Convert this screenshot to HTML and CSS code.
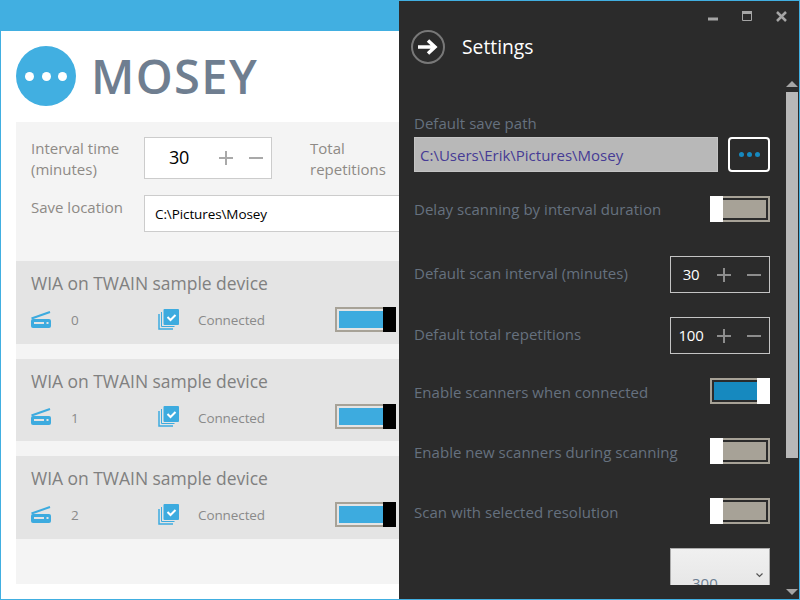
FILE: index.html
```html
<!DOCTYPE html>
<html lang="en">
<head>
<meta charset="utf-8">
<title>Mosey</title>
<link rel="stylesheet" href="styles.css">
</head>
<body>
<div class="window">
  <div class="titlebar"></div>
  <main class="main">
    <header class="brand">
      <div class="logo"><i></i><i></i><i></i></div>
      <h1 class="brand-name">MOSEY</h1>
    </header>
    <section class="panel">
      <div class="controls">
        <div class="line line-top">
          <div class="ctl-label">Interval time<br>(minutes)</div>
          <div class="stepper stepper-light">
            <span class="stepper-val">30</span>
            <svg class="stepper-ops" width="46" height="16" viewBox="0 0 46 16"><path d="M7 1v14M0 8h14M30 8h14" fill="none" stroke="#a9a9a9" stroke-width="2"/></svg>
          </div>
          <div class="ctl-label ctl-total">Total<br>repetitions</div>
        </div>
        <div class="line line-save">
          <div class="ctl-label">Save location</div>
          <div class="path-input">C:\Pictures\Mosey</div>
        </div>
      </div>
      <div class="devices">
        <article class="device">
          <div class="device-name">WIA on TWAIN sample device</div>
          <div class="device-row">
            <svg class="ic-scan" width="20" height="17" viewBox="0 0 20 17"><path d="M0.5 7.5 19 1" fill="none" stroke="#3dabdf" stroke-width="2"/><rect y="8" width="20" height="9" rx="2" fill="#3dabdf"/><rect x="3" y="11" width="10" height="2" fill="#e4e4e4"/><rect x="15.500" y="11" width="2" height="2" fill="#e4e4e4"/></svg>
            <span class="device-num">0</span>
            <svg class="ic-check" width="21" height="21" viewBox="0 0 21 21"><path d="M1 5v15h14" fill="none" stroke="#3dabdf" stroke-width="1.500"/><path d="M3.500 3v14.500h13" fill="none" stroke="#3dabdf" stroke-width="1"/><rect x="5.500" width="15.500" height="16" rx="1" fill="#3dabdf"/><path d="M9.500 8l3 3 5-5" fill="none" stroke="#fff" stroke-width="2"/></svg>
            <span class="device-status">Connected</span>
            <div class="dev-toggle"><b class="dev-fill"></b><b class="dev-thumb"></b></div>
          </div>
        </article>
        <article class="device">
          <div class="device-name">WIA on TWAIN sample device</div>
          <div class="device-row">
            <svg class="ic-scan" width="20" height="17" viewBox="0 0 20 17"><path d="M0.5 7.5 19 1" fill="none" stroke="#3dabdf" stroke-width="2"/><rect y="8" width="20" height="9" rx="2" fill="#3dabdf"/><rect x="3" y="11" width="10" height="2" fill="#e4e4e4"/><rect x="15.500" y="11" width="2" height="2" fill="#e4e4e4"/></svg>
            <span class="device-num">1</span>
            <svg class="ic-check" width="21" height="21" viewBox="0 0 21 21"><path d="M1 5v15h14" fill="none" stroke="#3dabdf" stroke-width="1.500"/><path d="M3.500 3v14.500h13" fill="none" stroke="#3dabdf" stroke-width="1"/><rect x="5.500" width="15.500" height="16" rx="1" fill="#3dabdf"/><path d="M9.500 8l3 3 5-5" fill="none" stroke="#fff" stroke-width="2"/></svg>
            <span class="device-status">Connected</span>
            <div class="dev-toggle"><b class="dev-fill"></b><b class="dev-thumb"></b></div>
          </div>
        </article>
        <article class="device">
          <div class="device-name">WIA on TWAIN sample device</div>
          <div class="device-row">
            <svg class="ic-scan" width="20" height="17" viewBox="0 0 20 17"><path d="M0.5 7.5 19 1" fill="none" stroke="#3dabdf" stroke-width="2"/><rect y="8" width="20" height="9" rx="2" fill="#3dabdf"/><rect x="3" y="11" width="10" height="2" fill="#e4e4e4"/><rect x="15.500" y="11" width="2" height="2" fill="#e4e4e4"/></svg>
            <span class="device-num">2</span>
            <svg class="ic-check" width="21" height="21" viewBox="0 0 21 21"><path d="M1 5v15h14" fill="none" stroke="#3dabdf" stroke-width="1.500"/><path d="M3.500 3v14.500h13" fill="none" stroke="#3dabdf" stroke-width="1"/><rect x="5.500" width="15.500" height="16" rx="1" fill="#3dabdf"/><path d="M9.500 8l3 3 5-5" fill="none" stroke="#fff" stroke-width="2"/></svg>
            <span class="device-status">Connected</span>
            <div class="dev-toggle"><b class="dev-fill"></b><b class="dev-thumb"></b></div>
          </div>
        </article>
      </div>
    </section>
  </main>

  <aside class="flyout">
    <div class="caption">
      <svg class="cap-ic" width="10" height="4" viewBox="0 0 10 4"><rect width="10" height="3" y="0.500" fill="#a5a5a5"/></svg>
      <svg class="cap-ic" width="10" height="10" viewBox="0 0 10 10"><path d="M0.500 0.500h9v9h-9z" fill="none" stroke="#a5a5a5"/><rect width="10" height="3" fill="#a5a5a5"/></svg>
      <svg class="cap-ic" width="11" height="11" viewBox="0 0 11 11"><path d="M1 1l9 9M10 1l-9 9" fill="none" stroke="#a5a5a5" stroke-width="2.500"/></svg>
    </div>
    <div class="fly-head">
      <div class="back">
        <svg width="22" height="16" viewBox="0 0 22 16"><path d="M1 8h17M11 1.500 18 8l-7 6.500" fill="none" stroke="#fff" stroke-width="3.500"/></svg>
      </div>
      <div class="fly-title">Settings</div>
    </div>
    <div class="fly-body">
      <div class="scroll">
        <div class="s-label">Default save path</div>
        <div class="path-row">
          <div class="s-path">C:\Users\Erik\Pictures\Mosey</div>
          <div class="dots"><i></i><i></i><i></i></div>
        </div>
        <div class="s-row toggle-row gap-24">
          <span class="s-label">Delay scanning by interval duration</span>
          <div class="tgl"><b class="tgl-fill"></b><b class="tgl-thumb"></b></div>
        </div>
        <div class="s-row step-row gap-34">
          <span class="s-label">Default scan interval (minutes)</span>
          <div class="stepper stepper-dark">
            <span class="stepper-val">30</span>
            <svg class="stepper-ops" width="46" height="16" viewBox="0 0 46 16"><path d="M7 1v14M0 8h14M30 8h14" fill="none" stroke="#8d8d8d" stroke-width="2"/></svg>
          </div>
        </div>
        <div class="s-row step-row gap-24">
          <span class="s-label">Default total repetitions</span>
          <div class="stepper stepper-dark">
            <span class="stepper-val">100</span>
            <svg class="stepper-ops" width="46" height="16" viewBox="0 0 46 16"><path d="M7 1v14M0 8h14M30 8h14" fill="none" stroke="#8d8d8d" stroke-width="2"/></svg>
          </div>
        </div>
        <div class="s-row toggle-row gap-24">
          <span class="s-label s-label-low">Enable scanners when connected</span>
          <div class="tgl tgl-on"><b class="tgl-fill"></b><b class="tgl-thumb"></b></div>
        </div>
        <div class="s-row toggle-row gap-34">
          <span class="s-label s-label-low">Enable new scanners during scanning</span>
          <div class="tgl"><b class="tgl-fill"></b><b class="tgl-thumb"></b></div>
        </div>
        <div class="s-row toggle-row gap-34">
          <span class="s-label s-label-low">Scan with selected resolution</span>
          <div class="tgl"><b class="tgl-fill"></b><b class="tgl-thumb"></b></div>
        </div>
        <div class="s-row select-row gap-24">
          <div class="select">
            <span class="select-val">300</span>
            <svg class="chev" width="7" height="5" viewBox="0 0 7 5"><path d="M0.500 0.500 3.500 3.500 6.500 0.500" fill="none" stroke="#555" stroke-width="1.200"/></svg>
          </div>
        </div>
      </div>
      <div class="scrollbar">
        <span class="arrow arrow-up"></span>
        <span class="thumb"></span>
        <span class="arrow arrow-down"></span>
      </div>
    </div>
  </aside>
</div>
</body>
</html>
```
FILE: styles.css
```css
* { box-sizing: border-box; }
html, body { margin: 0; padding: 0; }
body { font-family: "Open Sans", "Noto Sans", sans-serif; background: #fff; }

.window {
  position: relative;
  width: 800px;
  height: 600px;
  overflow: hidden;
  background: #fff;
  border: 1px solid #41afe1;
  border-top: 0;
  display: flex;
  flex-direction: column;
}
.titlebar { height: 31px; background: #41afe1; flex: none; }

.main { flex: 1; padding: 15px; display: flex; flex-direction: column; min-height: 0; }
.brand { display: flex; align-items: center; gap: 15px; height: 60px; flex: none; }
.logo {
  width: 60px; height: 60px; border-radius: 50%;
  background: #41afe1;
  display: flex; align-items: center; justify-content: center; gap: 7.500px;
}
.logo i { width: 9px; height: 9px; border-radius: 50%; background: #fff; }
.brand-name {
  margin: 0; font-size: 47px; font-weight: 600; line-height: 60px;
  color: #6f7e90; letter-spacing: 1.400px;
}

.panel { margin-top: 16px; flex: 1; background: #f4f4f4; min-height: 0; }
.controls { padding: 15px 15px 0; height: 139px; }
.line { display: flex; }
.ctl-label { width: 113px; font-size: 15px; line-height: 21px; color: #8e8a86; flex: none; }
.line-top .ctl-label { padding-top: 1px; }
.ctl-total { margin-left: 38px; }
.stepper { display: flex; align-items: center; flex: none; }
.stepper-light {
  width: 128px; height: 42px; background: #fff; border: 1px solid #ccc;
  color: #000; font-size: 18px; padding-left: 24px;
}
.stepper-light .stepper-val { width: 50px; padding-bottom: 2px; letter-spacing: -0.300px; }
.line-save { margin-top: 15px; }
.line-save .ctl-label { padding-top: 2px; }
.path-input {
  flex: 1; height: 37px; background: #fff; border: 1px solid #ccc;
  padding-left: 10px; font-size: 13.500px; line-height: 37px; color: #000; letter-spacing: -0.100px;
}

.devices { display: flex; flex-direction: column; gap: 15px; }
.device { height: 82.500px; background: #e4e4e4; padding: 9px 15px 0; }
.device-name { font-size: 17.500px; line-height: 26px; color: #808080; letter-spacing: -0.030px; }
.device-row { display: flex; align-items: center; height: 26px; margin-top: 10px; color: #8a8a8a; font-size: 13.500px; }
.ic-scan { flex: none; }
.device-num { width: 87px; margin-left: 20px; flex: none; padding-top: 2px; }
.ic-check { flex: none; }
.device-status { margin-left: 19px; width: 137px; flex: none; padding-top: 2px; letter-spacing: -0.100px; }
.dev-toggle {
  position: relative; width: 61px; height: 25px; flex: none;
  border: 2px solid #a7a297; border-right-width: 1px;
  background: #e4e4e4;
}
.dev-fill { position: absolute; left: 2px; top: 2px; bottom: 2px; width: 45px; background: #3dabdf; }
.dev-thumb { position: absolute; left: 46px; top: -2px; bottom: -2px; width: 13px; background: #000; }

.flyout {
  position: absolute; left: 398px; top: 1px; right: 0; bottom: 0;
  background: #2b2b2b; display: flex; flex-direction: column;
}
.caption { display: flex; height: 26px; align-items: flex-start; padding: 10px 12px 0 0; justify-content: flex-end; gap: 24px; flex: none; }
.cap-ic:first-child { margin-top: 6px; }
.fly-head { display: flex; align-items: center; height: 34px; margin-top: 3px; padding-left: 12px; gap: 17px; flex: none; }
.back {
  width: 34px; height: 34px; border-radius: 50%; border: 2px solid #787878;
  display: flex; align-items: center; justify-content: center;
}
.fly-title { font-size: 19.300px; color: #fff; line-height: 34px; }

.fly-body { flex: 1; min-height: 0; display: flex; margin-top: 16px; }
.scroll { width: 356px; margin-left: 15px; height: 505px; overflow: hidden; padding-top: 34px; flex: none; display: flex; flex-direction: column; }
.s-label { font-size: 15px; line-height: 18px; color: #66717f; letter-spacing: 0.030px; }
.step-row .s-label { padding-bottom: 4px; }
.s-label-low { padding-top: 2px; }
.path-row { display: flex; justify-content: space-between; margin-top: 5px; flex: none; }
.s-path {
  width: 304px; height: 35px; background: #b8b8b8; border: 1px solid #c4c4c4;
  color: #463b95; font-size: 15px; line-height: 34px; padding-left: 5px;
}
.dots {
  width: 42px; height: 35px; border: 2px solid #fff; border-radius: 4px;
  display: flex; align-items: center; justify-content: center; gap: 3px;
}
.dots i { width: 5px; height: 5px; border-radius: 50%; background: #1689bf; }

.s-row { display: flex; justify-content: space-between; align-items: center; flex: none; }
.toggle-row { height: 26px; }
.step-row { height: 37px; }
.select-row { justify-content: flex-end; }
.gap-24 { margin-top: 24px; }
.gap-34 { margin-top: 34px; }

.stepper-dark {
  width: 100px; height: 37px; border: 1px solid #c4c4c4; color: #fff;
  font-size: 15px; position: relative;
}
.stepper-dark .stepper-val { width: 40px; margin-right: 6px; text-align: center; padding-bottom: 1px; letter-spacing: -0.300px; }

.tgl { position: relative; width: 60px; height: 26px; border: 2px solid #a7a297; border-left: 0; flex: none; }
.tgl-fill { position: absolute; left: 13px; right: 2px; top: 2px; bottom: 2px; background: #a7a297; }
.tgl-thumb { position: absolute; left: 0; top: -2px; bottom: -2px; width: 13px; background: #fff; }
.tgl-on { border-left: 2px solid #a7a297; border-right: 0; }
.tgl-on .tgl-fill { left: 2px; right: 13px; background: #1689bf; }
.tgl-on .tgl-thumb { left: auto; right: 0; }

.select {
  width: 100px; height: 46px; position: relative;
  background: linear-gradient(#f0f0f0, #e5e5e5); border: 1px solid #acacac; border-bottom: 0;
  flex: none; display: flex;
}
.select-val { font-size: 15px; line-height: 20px; color: #6d7f92; padding: 24px 0 0 21px; }
.chev { position: absolute; right: 6px; top: 24px; }

.scrollbar { width: 12px; margin-left: 16px; padding-top: 1px; display: flex; flex-direction: column; align-items: center; flex: none; height: 530px; position: relative; }
.arrow { width: 0; height: 0; border-left: 6px solid transparent; border-right: 6px solid transparent; flex: none; }
.arrow-up { border-bottom: 6px solid #a5a5a5; }
.thumb { width: 12px; height: 366px; background: #b8b8b8; margin-top: 5px; flex: none; }
.arrow-down { border-top: 6px solid #a5a5a5; margin-top: 131px; }
```
